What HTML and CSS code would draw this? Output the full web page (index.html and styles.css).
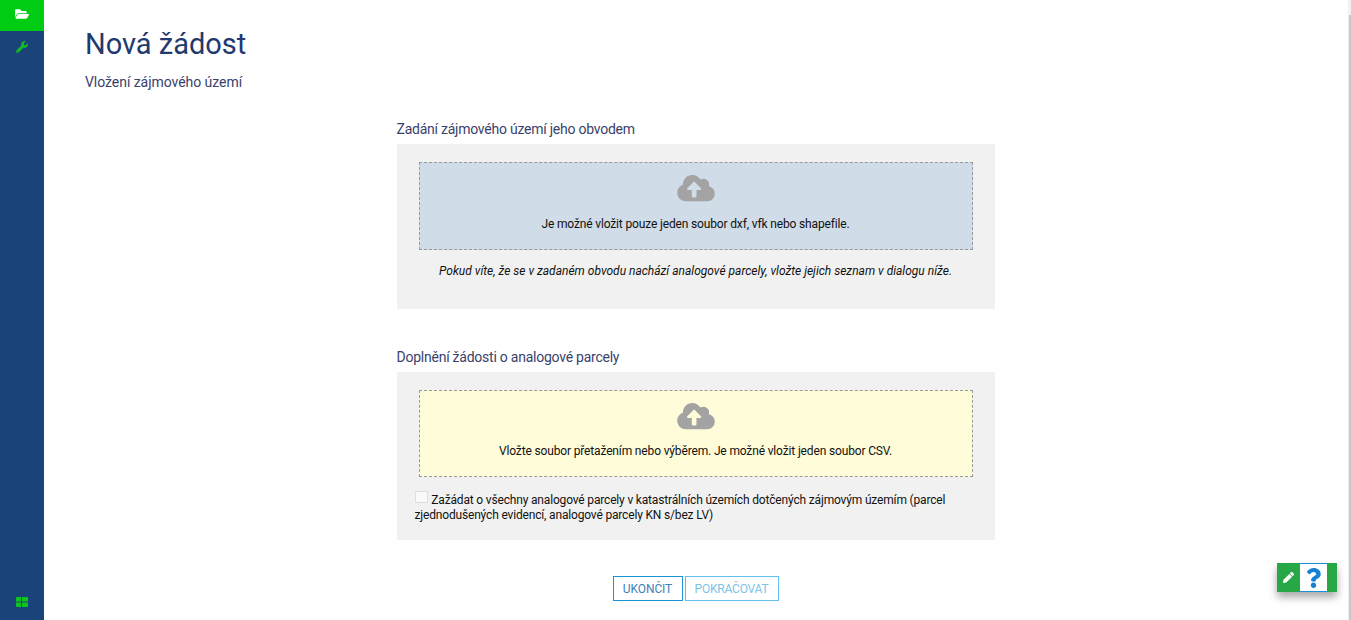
FILE: index.html
```html
<!DOCTYPE html>
<html lang="cs">
<head>
<meta charset="UTF-8">
<title>Nová žádost</title>
<link rel="stylesheet" href="styles.css">
</head>
<body>

<nav class="sidebar">
	<a class="side_item active">
		<svg class="side_icon" viewBox="0 0 576 512"><path d="M572.694 292.093L500.27 416.248A63.997 63.997 0 0 1 444.989 448H45.025c-18.523 0-30.064-20.093-20.731-36.093l72.424-124.155A64 64 0 0 1 152 256h399.964c18.523 0 30.064 20.093 20.73 36.093zM152 224h328v-48c0-26.51-21.49-48-48-48H272l-64-64H48C21.49 64 0 85.49 0 112v278.046l69.077-118.418C86.214 242.25 117.989 224 152 224z"/></svg>
	</a>
	<a class="side_item">
		<svg class="side_icon wrench" viewBox="0 0 512 512"><path d="M507.73 109.1c-2.24-9.03-13.54-12.09-20.12-5.51l-74.36 74.36-67.88-11.31-11.31-67.88 74.36-74.36c6.62-6.62 3.43-17.9-5.66-20.16-47.38-11.74-99.55.91-136.58 37.93-39.64 39.64-50.55 97.1-34.05 147.2L18.74 402.76c-24.99 24.99-24.99 65.51 0 90.5 24.99 24.99 65.51 24.99 90.5 0l213.21-213.21c50.12 16.71 107.47 5.68 147.37-34.22 37.07-37.07 49.7-89.32 37.91-136.73zM64 472c-13.25 0-24-10.75-24-24 0-13.26 10.75-24 24-24s24 10.74 24 24c0 13.25-10.75 24-24 24z"/></svg>
	</a>
	<a class="side_item bottom">
		<svg class="side_icon grid" viewBox="0 0 12 10"><path d="M0 1a1 1 0 0 1 1-1h4v4.500H0zM6 0h5a1 1 0 0 1 1 1v3.500H6zM0 5.500h5V10H1a1 1 0 0 1-1-1zM6 5.500h6V9a1 1 0 0 1-1 1H6z"/></svg>
	</a>
</nav>

<main class="content">
	<h1 class="page_title">Nová žádost</h1>
	<p class="page_sub">Vložení zájmového území</p>

	<div class="column">
		<h2 class="sec_title">Zadání zájmového území jeho obvodem</h2>
		<section class="panel panel_first">
			<div class="drop drop_blue">
				<svg class="cloud" viewBox="0 0 640 512"><path d="M537.6 226.6c4.1-10.7 6.4-22.4 6.4-34.6 0-53-43-96-96-96-19.7 0-38.1 6-53.3 16.2C367 64.2 315.3 32 256 32c-88.4 0-160 71.6-160 160 0 2.7.1 5.4.2 8.1C40.2 219.8 0 273.2 0 336c0 79.5 64.5 144 144 144h368c70.7 0 128-57.3 128-128 0-61.9-44-113.6-102.4-125.4zM393.4 288H328v112c0 8.8-7.2 16-16 16h-48c-8.8 0-16-7.2-16-16V288h-65.4c-14.3 0-21.4-17.2-11.3-27.3l105.4-105.4c6.2-6.2 16.4-6.2 22.6 0l105.4 105.4c10.1 10.1 2.9 27.3-11.4 27.3z"/></svg>
				<span>Je možné vložit pouze jeden soubor dxf, vfk nebo shapefile.</span>
			</div>
			<p class="note">Pokud víte, že se v zadaném obvodu nachází analogové parcely, vložte jejich seznam v dialogu níže.</p>
		</section>

		<h2 class="sec_title sec_second">Doplnění žádosti o analogové parcely</h2>
		<section class="panel panel_second">
			<div class="drop drop_yellow">
				<svg class="cloud" viewBox="0 0 640 512"><path d="M537.6 226.6c4.1-10.7 6.4-22.4 6.4-34.6 0-53-43-96-96-96-19.7 0-38.1 6-53.3 16.2C367 64.2 315.3 32 256 32c-88.4 0-160 71.6-160 160 0 2.7.1 5.4.2 8.1C40.2 219.8 0 273.2 0 336c0 79.5 64.5 144 144 144h368c70.7 0 128-57.3 128-128 0-61.9-44-113.6-102.4-125.4zM393.4 288H328v112c0 8.8-7.2 16-16 16h-48c-8.8 0-16-7.2-16-16V288h-65.4c-14.3 0-21.4-17.2-11.3-27.3l105.4-105.4c6.2-6.2 16.4-6.2 22.6 0l105.4 105.4c10.1 10.1 2.9 27.3-11.4 27.3z"/></svg>
				<span>Vložte soubor přetažením nebo výběrem. Je možné vložit jeden soubor CSV.</span>
			</div>
			<label class="check_row"><i class="check_box"></i> Zažádat o všechny analogové parcely v katastrálních územích dotčených zájmovým územím (parcel zjednodušených evidencí, analogové parcely KN s/bez LV)</label>
		</section>

		<div class="actions">
			<button class="btn">UKONČIT</button>
			<button class="btn btn_off">POKRAČOVAT</button>
		</div>
	</div>
</main>

<div class="help">
	<svg class="help_pen" viewBox="0 0 512 512"><path d="M497.9 142.1l-46.1 46.1c-4.7 4.7-12.3 4.7-17 0l-111-111c-4.7-4.7-4.7-12.3 0-17l46.1-46.1c18.7-18.7 49.1-18.7 67.9 0l60.1 60.1c18.8 18.7 18.8 49.1 0 67.9zM284.2 99.8L21.6 362.4.4 483.9c-2.9 16.4 11.4 30.6 27.8 27.8l121.5-21.3 262.6-262.6c4.7-4.7 4.7-12.3 0-17l-111-111c-4.8-4.7-12.4-4.7-17.1 0z"/></svg>
	<span class="help_q">
		<svg viewBox="0 0 384 512"><path d="M202.021 0C122.202 0 70.503 32.703 29.914 91.026c-7.363 10.58-5.093 25.086 5.178 32.874l43.138 32.709c10.373 7.865 25.132 6.026 33.253-4.148 25.049-31.381 43.63-49.449 82.757-49.449 30.764 0 68.816 19.799 68.816 49.631 0 22.552-18.617 34.134-48.993 51.164-35.423 19.86-82.299 44.576-82.299 106.405V320c0 13.255 10.745 24 24 24h72.471c13.255 0 24-10.745 24-24v-5.773c0-42.86 125.268-44.645 125.268-160.627C377.504 66.256 286.902 0 202.021 0zM192 373.459c-38.196 0-69.271 31.075-69.271 69.271 0 38.195 31.075 69.27 69.271 69.27s69.271-31.075 69.271-69.271-31.075-69.27-69.271-69.27z"/></svg>
	</span>
</div>

<div class="scroll_track"><div class="scroll_thumb"></div></div>

</body>
</html>
```

FILE: styles.css
```css
html,body{height:100%;}
body{margin:0;display:flex;overflow:hidden;background:#fff;font-family:Roboto,"Liberation Sans",sans-serif;font-size:12px;color:#111;}

.sidebar{width:44px;flex:none;display:flex;flex-direction:column;background:#1a4379;}
.side_item{height:31px;display:flex;align-items:center;justify-content:center;}
.side_item.active{background:#00cc14;padding-bottom:3px;height:28px;}
.side_item.active .side_icon{fill:#fff;}
.side_item.bottom{margin-top:auto;height:36px;}
.side_icon{width:14px;height:14px;fill:#0fc51f;}
.side_icon.wrench{width:12px;height:12px;fill:#10bd26;}
.side_icon.grid{width:12px;height:10px;}

.content{flex:1;min-width:0;padding:0 3px 0 41px;box-sizing:border-box;}
.page_title{margin:26px 0 0;font-size:29px;line-height:36px;font-weight:400;color:#22396f;}
.page_sub{margin:10px 0 0;font-size:14px;line-height:20px;letter-spacing:-.05px;color:#3a3f6c;}

.column{width:598px;margin:27px auto 0;position:relative;left:-21px;}
.sec_title{margin:0 0 5px;font-size:14px;line-height:20px;font-weight:400;letter-spacing:-.24px;color:#3a3f6c;}
.sec_second{margin-top:38px;}

.panel{background:#f1f1f1;padding:18px 22px 0;box-sizing:border-box;}
.panel_first{height:165px;}
.panel_second{height:168px;}

.drop{height:88px;box-sizing:border-box;border:1px dashed #999;display:flex;flex-direction:column;align-items:center;padding-top:10px;text-align:center;}
.drop_blue{background:#d0dce8;}
.drop_yellow{height:87px;background:#fffcd9;}
.drop_yellow span{margin-top:12px;}
.cloud{width:38px;height:30px;fill:#a3a3a3;}
.drop span{line-height:16px;letter-spacing:-.15px;}
.drop_blue span{margin-top:13px;}

.note{margin:13px 0 0;text-align:center;font-style:italic;line-height:16px;}

.check_row{display:block;margin:14px 0 0 -4px;line-height:15px;width:550px;letter-spacing:-.17px;}
.check_box{display:inline-block;width:11px;height:10px;margin-right:1px;border:1px solid #ddd;background:#f9f9f9;vertical-align:1px;}

.actions{display:flex;justify-content:center;gap:2px;margin-top:36px;}
.btn{width:70px;height:25px;padding:0;background:#fff;border:1px solid #1a93d8;font:12px Roboto,"Liberation Sans",sans-serif;letter-spacing:-.1px;color:#3d82ba;}
.btn_off{width:94px;border-color:#62c0ee;color:#7cc3e6;letter-spacing:-.2px;}

.help{position:fixed;left:1277px;top:563px;width:60px;height:29px;box-sizing:border-box;background:#27a745;display:flex;align-items:center;box-shadow:0 5px 8px rgba(0,0,0,.35);}
.help_pen{width:11px;height:11px;fill:#fff;margin-left:6px;}
.help_q{width:29px;height:29px;margin-left:5px;box-sizing:border-box;background:#fff;border:1px solid #1f8fd6;display:flex;align-items:center;justify-content:center;}
.help_q svg{width:15px;height:20px;fill:#1481d6;}

.scroll_track{position:fixed;right:0;top:0;width:3px;height:620px;background:#f1f1f1;}
.scroll_thumb{margin:15px 0 0 1px;height:605px;width:2px;background:#c8c8c8;}
```
